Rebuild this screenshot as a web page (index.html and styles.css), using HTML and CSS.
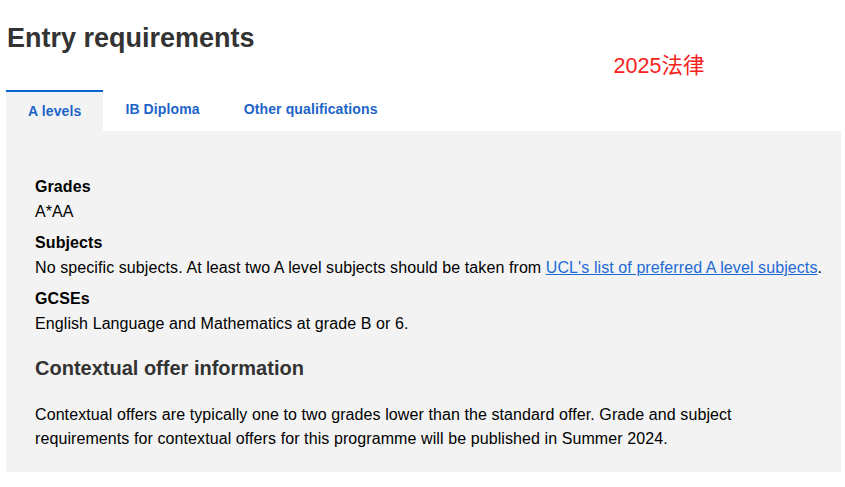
FILE: index.html
```html
<!doctype html>
<html>
<head>
    <meta charset="UTF-8">
    <title>Entry requirements</title>
    <link rel="stylesheet" href="styles.css">
</head>
<body>
<div class="entry">
    <div class="head">
        <h2 class="title">Entry requirements</h2>
        <span class="note">2025法律</span>
    </div>
    <div class="tabs">
        <button class="tab active">A levels</button>
        <button class="tab">IB Diploma</button>
        <button class="tab">Other qualifications</button>
    </div>
    <div class="panel">
        <div class="label">Grades</div>
        <div class="value">A*AA</div>
        <div class="label">Subjects</div>
        <div class="value">No specific subjects. At least two A level subjects should be taken from <a href="#">UCL's list of preferred A level subjects</a>.</div>
        <div class="label">GCSEs</div>
        <div class="value">English Language and Mathematics at grade B or 6.</div>
        <h3 class="subtitle">Contextual offer information</h3>
        <p class="text">Contextual offers are typically one to two grades lower than the standard offer. Grade and subject requirements for contextual offers for this programme will be published in Summer 2024.</p>
    </div>
</div>
</body>
</html>
```

FILE: styles.css
```css
body {
    margin: 0;
    font-family: "Liberation Sans", Arial, sans-serif;
    color: #000;
    background: #fff;
    letter-spacing: 0.09px;
}

.entry {
    width: 835px;
    padding: 0 4px 0 6px;
}

.head {
    display: flex;
    align-items: flex-start;
    height: 90px;
}

.title {
    margin: 20px 0 0 1px;
    font-size: 27px;
    line-height: 36px;
    font-weight: bold;
    color: #333;
    letter-spacing: 0;
}

.note {
    margin: 51px 0 0 359px;
    font-family: "Liberation Sans", "Noto Sans CJK SC", sans-serif;
    font-size: 21.5px;
    line-height: 30px;
    color: #f5221b;
    letter-spacing: 0;
}

.tabs {
    display: flex;
}

.tab {
    border: 0;
    border-top: 2px solid transparent;
    background: none;
    padding: 7px 22px 0;
    height: 41px;
    font-family: inherit;
    font-size: 14px;
    font-weight: bold;
    letter-spacing: 0.12px;
    color: #1c64c9;
    cursor: pointer;
    display: flex;
    align-items: flex-start;
    line-height: 20px;
}

.tab.active {
    border-top-color: #0c66d2;
    background: #f3f3f3;
    padding-top: 9px;
}

.panel {
    background: #f3f3f3;
    padding: 44px 8px 21px 29px;
}

.label {
    font-size: 16px;
    font-weight: bold;
    line-height: 24px;
    margin-bottom: 1px;
}

.value {
    font-size: 16px;
    line-height: 24px;
    margin-bottom: 7px;
}

.value a {
    color: #1d6ad5;
}

.subtitle {
    margin: 18px 0 0;
    font-size: 20px;
    line-height: 28px;
    color: #333;
    letter-spacing: 0;
}

.text {
    margin: 21px 0 0;
    font-size: 16px;
    line-height: 24px;
    max-width: 720px;
}
```
